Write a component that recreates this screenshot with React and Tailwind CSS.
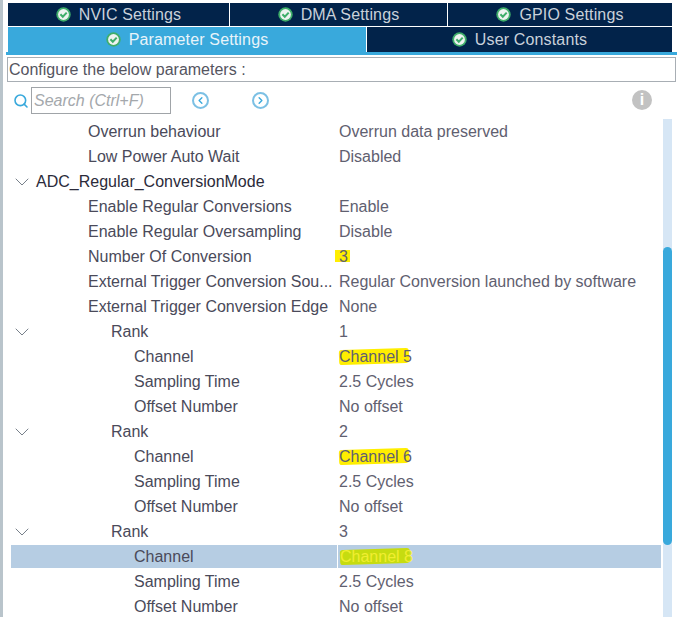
import { Search, ChevronDown, ChevronLeft, ChevronRight } from "lucide-react";

const rows = [
  { label: "Overrun behaviour", value: "Overrun data preserved", indent: 1 },
  { label: "Low Power Auto Wait", value: "Disabled", indent: 1 },
  { label: "ADC_Regular_ConversionMode", indent: 0, open: true, head: true },
  { label: "Enable Regular Conversions", value: "Enable", indent: 1 },
  { label: "Enable Regular Oversampling", value: "Disable", indent: 1 },
  { label: "Number Of Conversion", value: "3", indent: 1, mark: "three" },
  { label: "External Trigger Conversion Sou...", value: "Regular Conversion launched by software", indent: 1 },
  { label: "External Trigger Conversion Edge", value: "None", indent: 1 },
  { label: "Rank", value: "1", indent: 2, open: true },
  { label: "Channel", value: "Channel 5", indent: 3, mark: "channel" },
  { label: "Sampling Time", value: "2.5 Cycles", indent: 3 },
  { label: "Offset Number", value: "No offset", indent: 3 },
  { label: "Rank", value: "2", indent: 2, open: true },
  { label: "Channel", value: "Channel 6", indent: 3, mark: "channel" },
  { label: "Sampling Time", value: "2.5 Cycles", indent: 3 },
  { label: "Offset Number", value: "No offset", indent: 3 },
  { label: "Rank", value: "3", indent: 2, open: true },
  { label: "Channel", value: "Channel 8", indent: 3, mark: "channel", selected: true },
  { label: "Sampling Time", value: "2.5 Cycles", indent: 3 },
  { label: "Offset Number", value: "No offset", indent: 3 },
];

const indents = ["pl-[25px]", "pl-[77px]", "pl-[100px]", "pl-[123px]"];

function CheckBadge() {
  return (
    <svg width="15" height="15" viewBox="0 0 15 15" className="shrink-0">
      <circle cx="7.5" cy="7.5" r="7.2" fill="#3fae6a" />
      <circle cx="7.5" cy="7.5" r="5.4" fill="#eef3f0" />
      <path d="M4.4 7.2 L6.8 9.7 L10.7 5.6" fill="none" stroke="#3fae6a" strokeWidth="2" />
    </svg>
  );
}

function Tab({ label, active, className }) {
  return (
    <div
      className={`flex items-center justify-center gap-2 tracking-[0.15px] ${
        active ? "bg-[#39a9dc] text-[#e8f4fa]" : "bg-[#02234a] text-[#c9d1da]"
      } ${className}`}
    >
      <CheckBadge />
      <span>{label}</span>
    </div>
  );
}

function Row({ row }) {
  return (
    <div className={`flex h-[25px] items-center ${row.selected ? "border-y border-white bg-[#b6cde3]" : ""}`}>
      <div
        className={`relative flex h-full w-[326px] shrink-0 items-center whitespace-nowrap ${indents[row.indent]} ${
          row.head ? "text-[#2b2b3a]" : "text-[#4a4a5a]"
        }`}
      >
        {row.open && (
          <ChevronDown size={24} strokeWidth={1} className="absolute left-[-1px] top-px text-[#77808a]" />
        )}
        {row.label}
      </div>
      <div className={`relative flex h-full flex-1 items-center whitespace-nowrap pl-[2px] text-[#5f6070] ${row.selected ? "border-l border-white" : ""}`}>
        {row.mark === "three" && <span className="absolute left-[-2px] top-[6px] h-[12px] w-[15px] bg-[#ffee00]" />}
        {row.mark === "channel" && (
          <span className={`absolute left-[2px] ${row.selected ? "top-[4px]" : "top-[5px]"} h-[15px] w-[70px] -rotate-2 rounded-[3px] ${row.selected ? "bg-[#c6dc10]" : "bg-[#ffee00]"}`} />
        )}
        <span className={`relative ${row.selected ? "text-[#f1ee30]" : ""}`}>{row.value}</span>
      </div>
    </div>
  );
}

export default function App() {
  return (
    <div className="flex h-[617px] w-[677px] overflow-hidden bg-white font-['Liberation_Sans',sans-serif] text-[16px] leading-none">
      <div className="w-[3px] shrink-0 bg-[#b9c4cb]" />
      <div className="flex min-w-0 flex-1 flex-col">
        {/* tabs */}
        <div className="flex flex-col pt-[3px]">
          <div className="ml-[5px] mr-[5px] flex h-[23px] gap-px">
            <Tab label="NVIC Settings" className="w-[221px]" />
            <Tab label="DMA Settings" className="w-[217px]" />
            <Tab label="GPIO Settings" className="flex-1" />
          </div>
          <div className="ml-[5px] mr-[5px] mt-px flex h-[25px] gap-px">
            <Tab label="Parameter Settings" active className="w-[358px]" />
            <Tab label="User Constants" className="flex-1" />
          </div>
          <div className="ml-[3px] h-[3px] bg-[#39a9dc]" />
        </div>

        {/* configure box */}
        <div className="ml-[4px] mr-px mt-[2px] flex h-[25px] items-center border border-[#a8aeb4] px-px text-[#55555f]">
          Configure the below parameters :
        </div>

        {/* search row */}
        <div className="relative flex h-[37px] items-center pl-[10px]">
          <Search size={16} strokeWidth={2.4} className="text-[#39a9dc]" />
          <div className="ml-[2px] flex h-[27px] w-[140px] items-center border border-[#a0a4a8] pl-[2px] italic text-[#a4a8ac]">
            Search (Ctrl+F)
          </div>
          <span className="ml-[21px] flex h-[17px] w-[17px] items-center justify-center rounded-full border-2 border-[#7cc0e4]">
            <ChevronLeft size={11} strokeWidth={3} className="text-[#39a9dc]" />
          </span>
          <span className="ml-[43px] flex h-[17px] w-[17px] items-center justify-center rounded-full border-2 border-[#7cc0e4]">
            <ChevronRight size={11} strokeWidth={3} className="text-[#39a9dc]" />
          </span>
          <span className="absolute left-[629px] top-[8px] flex h-[20px] w-[20px] items-center justify-center rounded-full bg-[#c2c2c2] font-bold text-white">
            i
          </span>
        </div>

        {/* parameter tree */}
        <div className="flex min-h-0 flex-1 pl-[8px]">
          <div className="min-w-0 flex-1">
            {rows.map((row, i) => (
              <Row key={i} row={row} />
            ))}
          </div>
          <div className="ml-[2px] mr-[5px] w-[9px] shrink-0 bg-[#d6e6f5] pt-[128px]">
            <div className="h-[298px] rounded-full bg-[#39a9dc]" />
          </div>
        </div>
      </div>
    </div>
  );
}
